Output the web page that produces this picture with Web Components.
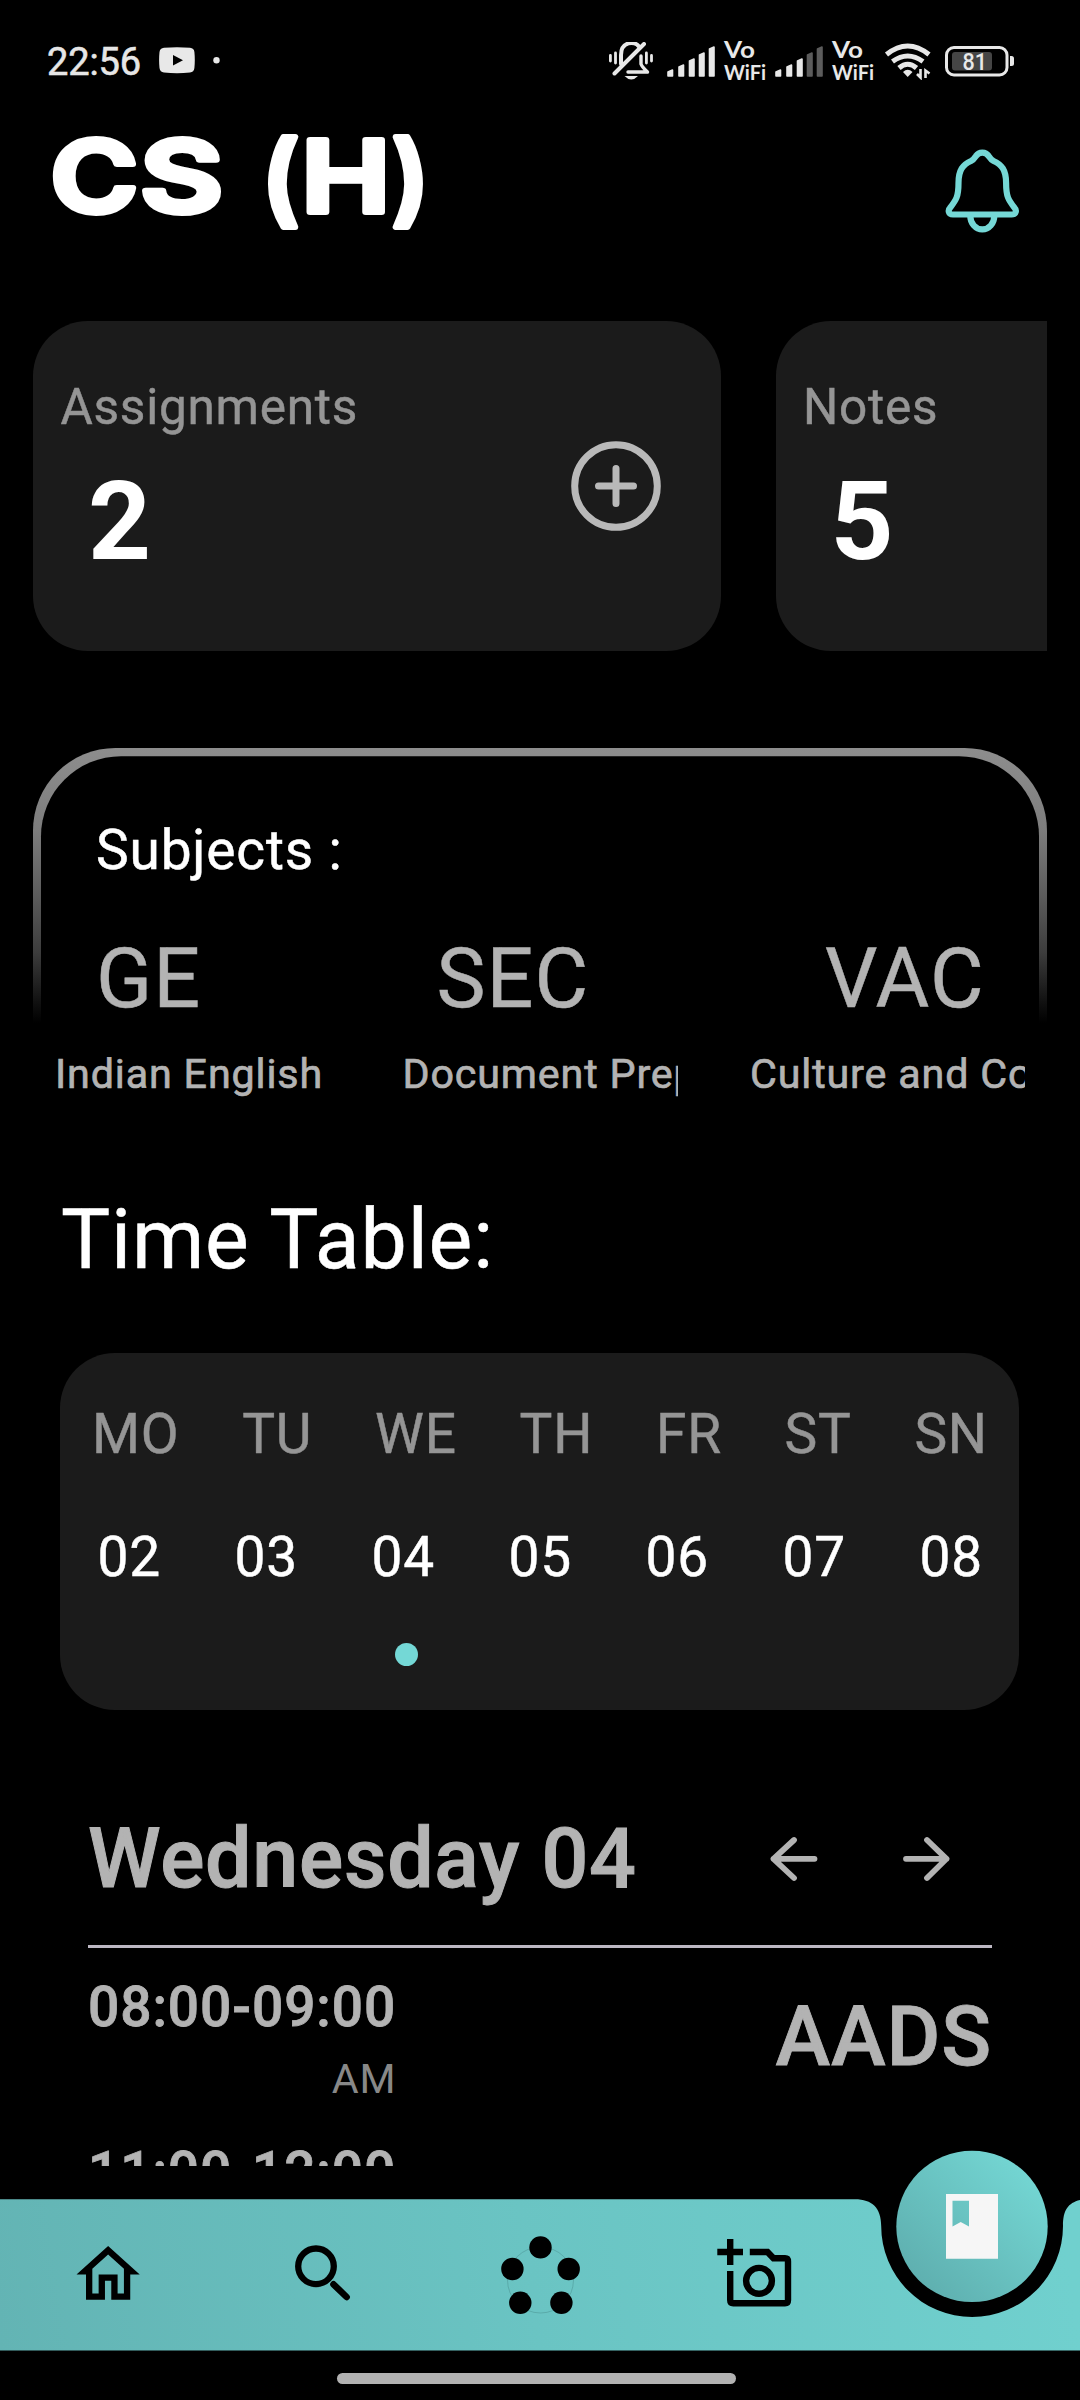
<!DOCTYPE html>
<html lang="en">
<head>
<meta charset="utf-8">
<title>CS (H)</title>
<style>
  html, body { margin: 0; background: #000; }
  body { width: 1080px; height: 2400px; overflow: hidden; font-family: Roboto, "Liberation Sans", sans-serif; }
</style>
</head>
<body>
<app-screen></app-screen>
<script>
const define = (name, html) => customElements.define(name, class extends HTMLElement {
  constructor() {
    super();
    const t = document.createElement('template');
    t.innerHTML = html;
    this.attachShadow({ mode: 'open' }).appendChild(t.content.cloneNode(true));
  }
});

const bars = level => [[667,71,68,76],[678,66,63,76],[688.5,60,57,76],[698.5,54,51,76],[708.5,48,45,76]]
  .map(([x, yl, yr, b], i) => {
    const c = i >= level ? '#5c5c5c' : '#e8e8e8';
    return `<path d="M${x+1} ${b-1}V${yl}L${x+5.5} ${yr+1}V${b-1}Z" fill="${c}" stroke="${c}" stroke-width="1.6" stroke-linejoin="round"/>`;
  }).join('');

customElements.define('cell-signal', class extends HTMLElement {
  connectedCallback() {
    this.attachShadow({ mode: 'open' }).innerHTML =
      `<style>:host{display:block;width:49px;height:38px}svg{display:block}</style>
       <svg width="49" height="38" viewBox="667 41 49 38">${bars(+this.getAttribute('level'))}</svg>`;
  }
});

define('vo-wifi', `<style>:host{display:block;width:42px;height:40px}svg{display:block;overflow:visible}
  text{font-family:Lato,sans-serif;font-weight:700;fill:#e8e8e8}</style>
  <svg width="42" height="40" viewBox="0 0 42 40">
    <text x="0" y="17.2" font-size="23" textLength="31" lengthAdjust="spacingAndGlyphs">Vo</text>
    <text x="0" y="38.5" font-size="21.5" textLength="42" lengthAdjust="spacingAndGlyphs">WiFi</text>
  </svg>`);

define('status-bar', `<style>
  :host{display:flex;height:121px;align-items:center;box-sizing:border-box;padding:0 66px 0 47px;color:#e6e6e6}
  .time{font-size:38px;line-height:44px;font-weight:400;-webkit-text-stroke:.6px #e6e6e6;width:112px;letter-spacing:-.1px;padding-top:2px}
  .sp{flex:1} svg{display:block;flex:none}
  .yt{margin-right:17.500px}
  .mute{margin-right:13px} cell-signal{margin-right:8px} vo-wifi{margin-right:9px} vo-wifi.last{margin-right:10px}
  .wifi{margin-right:13px}
  text{font-family:Roboto,sans-serif;font-weight:500;fill:#e8e8e8}
  </style>
  <div class="time">22:56</div>
  <svg class="yt" width="36" height="27" viewBox="0 0 36 27"><path d="M5 .8Q18-.3 31 .8Q35 1.2 35.4 5Q36.2 13 35.4 21Q35 25 31 25.5Q18 26.8 5 25.5Q1 25 .5 21Q-.3 13 .5 5Q1 1.2 5 .8Z" fill="#e8e8e8"/><path d="M14 8L24 13.3L14 18.6Z" fill="#000"/></svg>
  <svg width="7" height="7" viewBox="0 0 7 7"><circle cx="3.5" cy="3.2" r="3.2" fill="#e8e8e8"/></svg>
  <div class="sp"></div>
  <svg class="mute" width="45" height="38" viewBox="609 42 45 38" fill="none" stroke="#e8e8e8" stroke-width="3.4" stroke-linecap="round">
    <path d="M610.4 55.5V61M615.5 53V63M646.4 53V63M651.5 55.5V61" stroke-width="2.8"/>
    <path d="M621 64V55C621 41 635 41 638.5 46" stroke-width="4"/><path d="M641 56V64Q642 67 647.5 72H628" stroke-linejoin="round"/>
    <path d="M614.5 73.5L644 44" stroke-width="4"/>
    <path d="M624.5 76H638Q631.3 83 624.5 76Z" fill="#e8e8e8" stroke="none"/>
  </svg>
  <cell-signal level="5"></cell-signal><vo-wifi></vo-wifi><cell-signal level="3"></cell-signal><vo-wifi class="last"></vo-wifi>
  <svg class="wifi" width="48" height="38" viewBox="883 42 48 38" fill="none" stroke="#e8e8e8" stroke-width="5">
    <path d="M885.5 54.5Q906.7 37.5 928 54.5M891.5 61.5Q906.7 50.5 922 61.5M898 68Q906.7 60.5 915.5 68"/>
    <path d="M902 72Q906.7 67.5 911.5 72L906.7 77Z" fill="#e8e8e8" stroke="none"/>
    <path d="M919.5 69V77.5L916 74M924.500 78V70.500L928.500 73.500" stroke-width="2.6"/>
  </svg>
  <svg width="69" height="34" viewBox="945 43 69 34">
    <rect x="946.5" y="46.500" width="60.500" height="27.500" rx="7.500" fill="none" stroke="#e8e8e8" stroke-width="3"/>
    <rect x="952" y="51" width="40" height="18.500" rx="3" fill="#454545"/>
    <path d="M1010 55h1.500q2.500 0 2.500 2.500v5q0 2.500-2.500 2.500h-1.500z" fill="#e8e8e8"/>
    <text x="962.500" y="69" font-size="23" textLength="24.500" lengthAdjust="spacingAndGlyphs">81</text>
  </svg>`);

define('page-header', `<style>
  :host{display:flex;height:200px;box-sizing:border-box;padding:0 60px 0 50px;justify-content:space-between}
  svg{display:block;overflow:visible}
  text{font-family:Inter,"Liberation Sans",sans-serif;font-weight:600;font-size:99px;fill:#fff;stroke:#fff;stroke-width:6;stroke-linejoin:round}
  </style>
  <svg width="380" height="112" viewBox="50 121 380 112">
    <text transform="translate(50.500 212) scale(1.200 1)">C</text><text transform="translate(140 212) scale(1.290 1)">S</text>
    <text transform="translate(262 212.500)">(</text><text transform="translate(301.500 212) scale(1.200 1)">H</text><text transform="translate(391.900 212.500)">)</text>
  </svg>
  <svg width="76" height="112" viewBox="944 121 76 112" fill="none" stroke="#75d8d6" stroke-width="6.200" stroke-linejoin="round">
    <path d="M953 214.500C948 214.500 948 210 950 208C956 200 958.500 197 958.500 183C958.500 170 963 164.500 971 161C975 159 974 158 976 156A7.500 7.500 0 0 1 988.600 156C990.600 158 989.600 159 993.600 161C1001.600 164.500 1006.100 170 1006.100 183C1006.100 197 1008.600 200 1014.600 208C1016.600 210 1016.600 214.500 1011.600 214.500Z"/>
    <path d="M970.300 216A12 13.400 0 0 0 994.300 216"/>
  </svg>`);

define('stat-card', `<style>
  :host{display:flex;flex:none;width:687.500px;height:330px;border-radius:55px;background:#1b1b1b;box-sizing:border-box;padding:52.500px 59.500px 0 27.500px;justify-content:space-between}
  .l{font-size:49.500px;line-height:66px;letter-spacing:.750px;color:#959595}
  .v{font-size:110px;line-height:110px;font-weight:700;-webkit-text-stroke:0;color:#fff;padding-left:27.500px;margin-top:27px}
  svg{display:block;margin-top:67.500px}
  </style>
  <div><div class="l"><slot name="label"></slot></div><div class="v"><slot></slot></div></div>
  <svg width="90" height="90" viewBox="0 0 90 90" fill="none" stroke="#b9b9b9" stroke-width="7"><circle cx="45" cy="45" r="41.300"/><path d="M45 27.500V62.500M27.500 45H62.500" stroke-linecap="round"/></svg>`);

define('stat-carousel', `<style>:host{display:flex;gap:55px;margin:0 33px;overflow:hidden;height:330px}</style><slot></slot>`);

define('subject-item', `<style>
  :host{display:block;width:275px;overflow:hidden;color:#b3b3b3}
  .c{font-size:82.500px;line-height:96px;letter-spacing:1.100px;padding-left:var(--indent,0px);white-space:nowrap}
  .n{font-size:41.250px;line-height:50px;-webkit-text-stroke:.700px;letter-spacing:.840px;white-space:nowrap;margin-top:22px;overflow:hidden}
  </style><div class="c"><slot name="code"></slot></div><div class="n"><slot></slot></div>`);

define('subject-panel', `<style>
  :host{display:block;height:420px;margin:97px 33px 0;box-sizing:border-box;padding:0 22px;
    --g:linear-gradient(#8d8d8d 0,#888 30px,#7c7c7c 84px,#606060 140px,#3c3c3c 205px,#101010 255px,#000 275px)}
  .frame{height:275px;margin:0 -22px -275px;border-radius:82.500px 82.500px 0 0;background:var(--g)}
  .frame div{box-sizing:border-box;height:275px;background:#000;border-radius:80px 80px 0 0;margin:0 8.250px;transform:translateY(8.250px)}
  .body{display:flow-root;position:relative}
  h2{margin:69px 0 0 41px;font-weight:400;font-size:55px;line-height:66px;color:#fff}
  .row{display:flex;justify-content:space-between;margin-top:48px}
  </style>
  <div class="frame"><div></div></div>
  <div class="body"><h2><slot name="title"></slot></h2><div class="row"><slot></slot></div></div>`);

define('week-card', `<style>
  :host{display:block;margin:0 61px 0 60px;height:357.500px;border-radius:55px;background:#1b1b1b;box-sizing:border-box;padding:48px 31px 0 32px;font-size:55px;line-height:66px}
  .r{display:flex;justify-content:space-between}
  .d{color:#959595}.n{color:#fff;margin:57px 5px 0 5.500px}
  i{display:block;width:23px;height:23px;border-radius:50%;background:#74d8d6;margin:53px 0 0 303px}
  </style>
  <div class="r d"><span>MO</span><span>TU</span><span>WE</span><span>TH</span><span>FR</span><span>ST</span><span>SN</span></div>
  <div class="r n"><span>02</span><span>03</span><span>04</span><span>05</span><span>06</span><span>07</span><span>08</span></div><i></i>`);

define('class-row', `<style>
  :host{display:flex;justify-content:space-between;height:165px;color:#b3b3b3;-webkit-text-stroke:.8px}
  .t{font-size:55px;line-height:66px;font-weight:500;letter-spacing:.950px}
  .p{font-size:41.250px;line-height:66px;color:#888;text-align:right;margin-top:6px;-webkit-text-stroke:0}
  .s{font-size:82.500px;line-height:96px;font-weight:500;margin-top:15px}
  </style><div><div class="t"><slot name="time"></slot></div><div class="p"><slot name="period"></slot></div></div><div class="s"><slot></slot></div>`);

define('day-schedule', `<style>
  :host{display:block;margin:0 88px;height:456px;overflow:hidden;color:#b3b3b3}
  .h{display:flex;align-items:center;height:96px;padding-top:101px}
  .h b{flex:1;font-size:82.500px;line-height:96px;font-weight:500;letter-spacing:.750px;-webkit-text-stroke:1px}
  svg{display:block}
  hr{border:0;margin:38px 0 26px;height:3px;background:#bdb8c3}
  </style>
  <div class="h"><b><slot name="day"></slot></b>
  <svg width="222" height="50" viewBox="770 1834 222 50" fill="none" stroke="#b3b3b3" stroke-width="5.800" stroke-linecap="round" stroke-linejoin="round">
    <path d="M814.500 1858.800H773.500M794 1840L773.500 1858.800L794 1878M906 1858.800H946.500M927 1840L946.500 1858.800L927 1878"/></svg></div>
  <hr><slot></slot>`);

define('bottom-nav', `<style>
  :host{display:block;height:201px}
  svg{display:block}
  </style>
  <svg width="1080" height="201" viewBox="0 2150 1080 201">
    <defs>
      <linearGradient id="bar" gradientUnits="userSpaceOnUse" x1="0" y1="2350" x2="1060" y2="2199"><stop offset="0" stop-color="#63b4b4"/><stop offset=".5" stop-color="#6ac4c3"/><stop offset="1" stop-color="#70d0ce"/></linearGradient>
      <linearGradient id="fab" gradientUnits="userSpaceOnUse" x1="918" y1="2280" x2="1026" y2="2172"><stop offset="0" stop-color="#5fb0b0"/><stop offset="1" stop-color="#73d5d2"/></linearGradient>
    </defs>
    <path fill="url(#bar)" d="M0 2199.300H855C872 2199.300 881.200 2208 881.200 2226A90.900 91 0 0 0 1063 2226C1063 2210 1068 2203 1080 2200V2350.500H0Z"/>
    <circle cx="972" cy="2226.400" r="75.700" fill="url(#fab)"/>
    <path fill="#f6f6f6" fill-rule="evenodd" d="M946 2194H998V2258.700H946ZM952.500 2200.700V2226.500L960.700 2222L969 2226.500V2200.700Z"/>
    <g transform="translate(70.200 2236.500) scale(3.160)"><path d="M12 5.690l5 4.500V18h-2v-6H9v6H7v-7.810l5-4.500M12 3L2 12h3v8h6v-6h2v6h6v-8h3L12 3z"/></g>
    <g fill="none" stroke="#000"><circle cx="316" cy="2266.300" r="17.800" stroke-width="6.300"/><path d="M333.500 2284.300L346.600 2297" stroke-width="6.600" stroke-linecap="round"/></g>
    <circle cx="540.500" cy="2280" r="33" fill="none" stroke="#3c7a7a" stroke-width=".5" opacity=".7"/>
    <g><circle cx="540.500" cy="2247.400" r="11.200"/><circle cx="512.400" cy="2269" r="11.200"/><circle cx="568.700" cy="2269" r="11.200"/><circle cx="520.300" cy="2302.800" r="11.200"/><circle cx="561.400" cy="2302.800" r="11.200"/></g>
    <g fill="none" stroke="#000" stroke-width="6.400"><path d="M730.200 2239V2265M717.300 2252H743M749.800 2252H767.500L773.500 2258.300H785Q788 2258.300 788 2261.500V2300Q788 2303.300 785 2303.300H733.300Q730.200 2303.300 730.200 2300V2271"/><circle cx="759" cy="2280.800" r="12.900"/></g>
  </svg>`);

define('gesture-bar', `<style>:host{display:flex;justify-content:center;height:49px;padding-right:7px}
  div{width:399px;height:10.500px;border-radius:6px;background:#b2b2b2;margin-top:22px}</style><div></div>`);

define('app-screen', `<style>
  :host{display:flex;flex-direction:column;width:1080px;height:2400px;background:#000;overflow:hidden;letter-spacing:.825px;-webkit-text-stroke:.5px}
  h1{margin:16px 61px 0;height:168.700px;box-sizing:border-box;padding-top:8px;font-weight:400;font-size:82.500px;line-height:96px;color:#fff}
  status-bar,page-header{letter-spacing:0;-webkit-text-stroke:0}
  bottom-nav{margin-top:-16px}
  :host>*{flex:none}
  </style>
  <status-bar></status-bar>
  <page-header></page-header>
  <stat-carousel>
    <stat-card><span slot="label">Assignments</span>2</stat-card>
    <stat-card><span slot="label">Notes</span>5</stat-card>
  </stat-carousel>
  <subject-panel><span slot="title">Subjects :</span>
    <subject-item style="--indent:41px"><span slot="code">GE</span>Indian English</subject-item>
    <subject-item style="--indent:34px"><span slot="code">SEC</span>Document Prep</subject-item>
    <subject-item style="--indent:75px"><span slot="code">VAC</span>Culture and Co</subject-item>
  </subject-panel>
  <h1>Time Table:</h1>
  <week-card></week-card>
  <day-schedule><span slot="day">Wednesday 04</span>
    <class-row><span slot="time">08:00-09:00</span><span slot="period">AM</span>AADS</class-row>
    <class-row><span slot="time">11:00-12:00</span></class-row>
  </day-schedule>
  <bottom-nav></bottom-nav>
  <gesture-bar></gesture-bar>`);
</script>
</body>
</html>
